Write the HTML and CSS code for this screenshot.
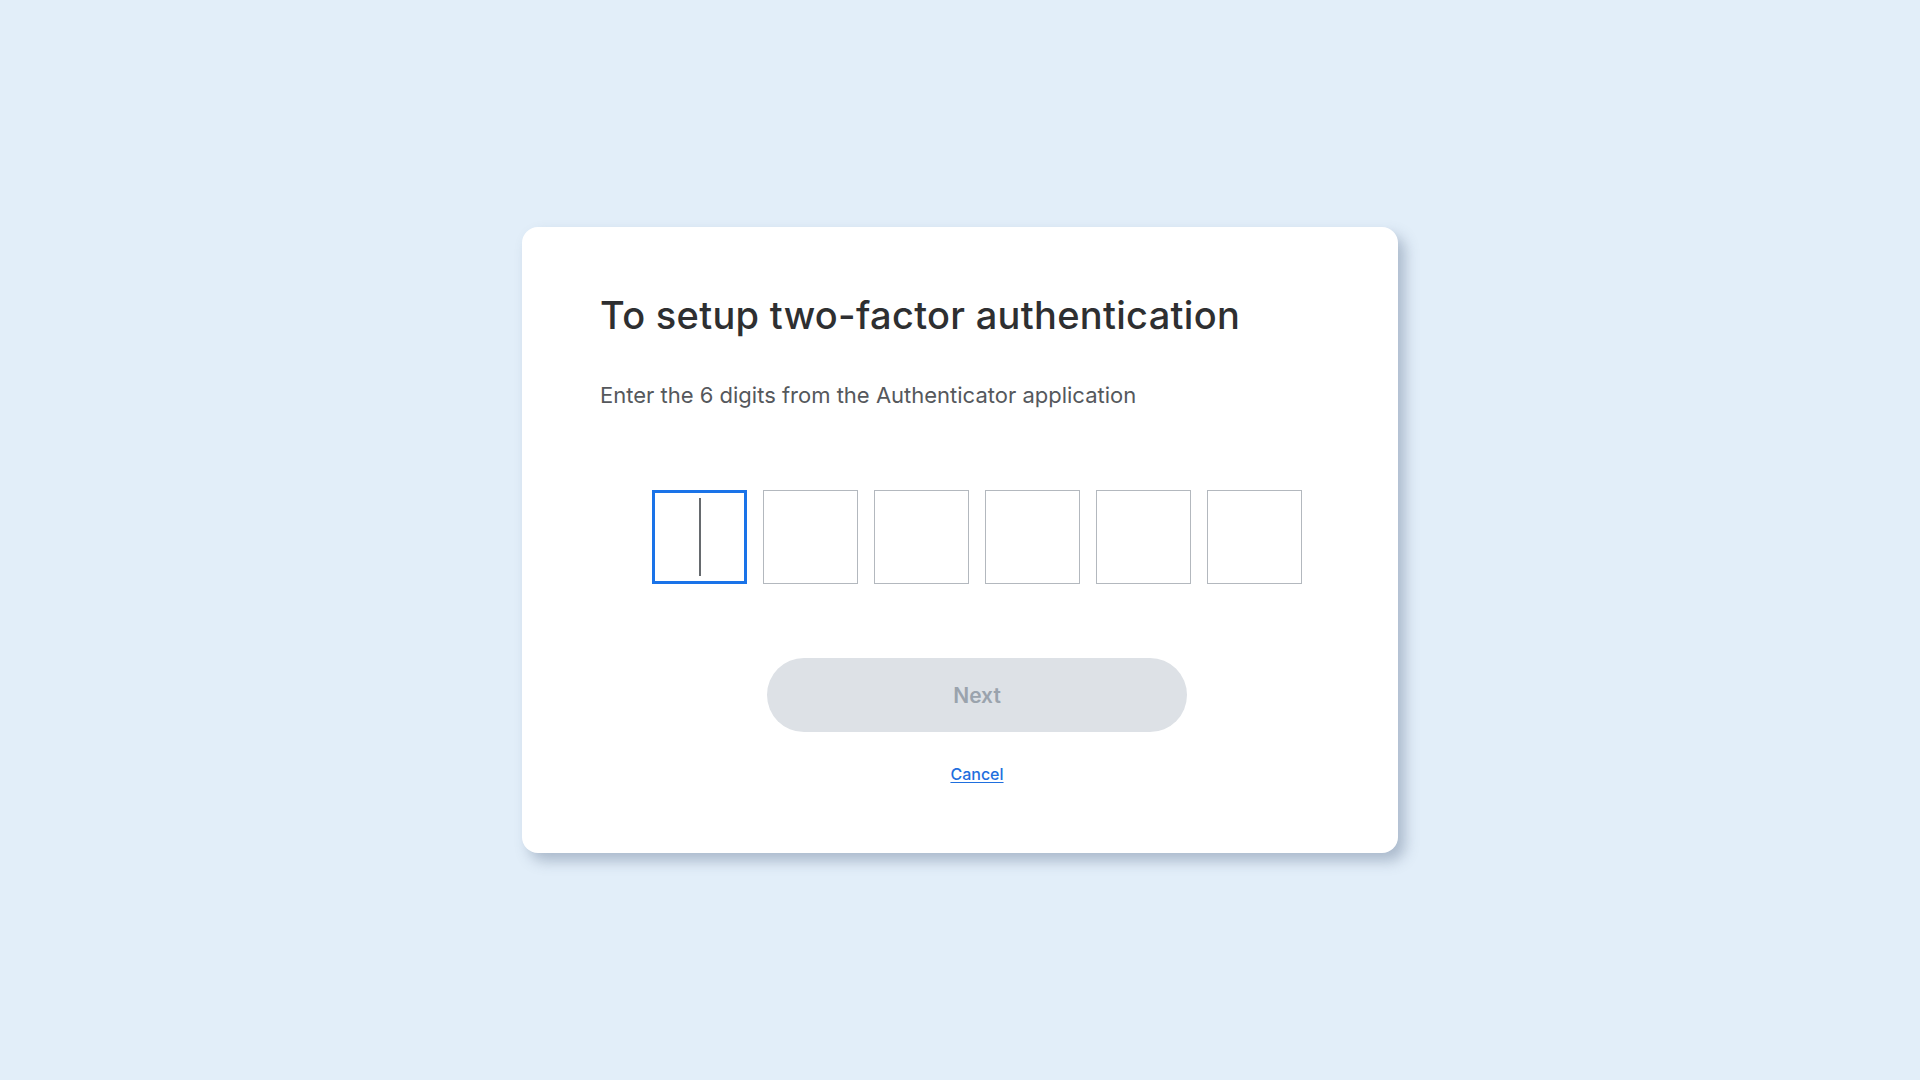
FILE: index.html
```html
<!DOCTYPE html>
<html lang="en">
<head>
<meta charset="utf-8">
<title>Two-factor authentication</title>
<link rel="stylesheet" href="styles.css">
</head>
<body>
<main class="page">
  <section class="card">
    <h1 class="title">To setup two-factor authentication</h1>
    <p class="subtitle">Enter the 6 digits from the Authenticator application</p>
    <div class="content">
      <div class="code">
        <div class="digit active"><span class="caret"></span></div>
        <div class="digit"></div>
        <div class="digit"></div>
        <div class="digit"></div>
        <div class="digit"></div>
        <div class="digit"></div>
      </div>
      <button class="next" type="button" disabled>Next</button>
      <a class="cancel" href="#">Cancel</a>
    </div>
  </section>
</main>
</body>
</html>
```

FILE: styles.css
```css
* { box-sizing: border-box; }

html, body {
  margin: 0;
  padding: 0;
  height: 100%;
}

body {
  background: #e2eef9;
  font-family: Inter, "Noto Sans", sans-serif;
}

.page {
  height: 1080px;
  display: flex;
  align-items: center;
  justify-content: center;
}

.card {
  width: 876px;
  background: #ffffff;
  border-radius: 16px;
  box-shadow: 7px 8px 14px rgba(70, 90, 120, 0.35);
  padding: 65px 44px 69px 78px;
  display: flex;
  flex-direction: column;
}

.title {
  margin: 0;
  font-size: 38px;
  line-height: 46px;
  font-weight: 500;
  color: #2e2f31;
  letter-spacing: 0.3px;
}

.subtitle {
  margin: 44px 0 0;
  font-size: 22px;
  line-height: 26px;
  font-weight: 400;
  color: #55585c;
}

.content {
  display: flex;
  flex-direction: column;
  align-items: center;
}

.code {
  margin-top: 82px;
  display: flex;
  gap: 16px;
}

.digit {
  width: 95px;
  height: 94px;
  border: 1.5px solid #b3b8be;
  display: flex;
  align-items: center;
  justify-content: center;
  background: #fff;
}

.digit.active {
  border: 3px solid #1a73e8;
}

.caret {
  width: 2px;
  height: 78px;
  background: #666a6e;
}

.next {
  margin-top: 74px;
  width: 420px;
  height: 74px;
  border: none;
  border-radius: 37px;
  background: #dde1e6;
  color: #9aa3ad;
  font-family: Inter, "Noto Sans", sans-serif;
  font-size: 21px;
  font-weight: 600;
  cursor: default;
}

.cancel {
  margin-top: 32px;
  font-size: 16px;
  line-height: 20px;
  font-weight: 500;
  color: #1f6fde;
  text-decoration: underline;
  text-underline-offset: 2px;
}
```
